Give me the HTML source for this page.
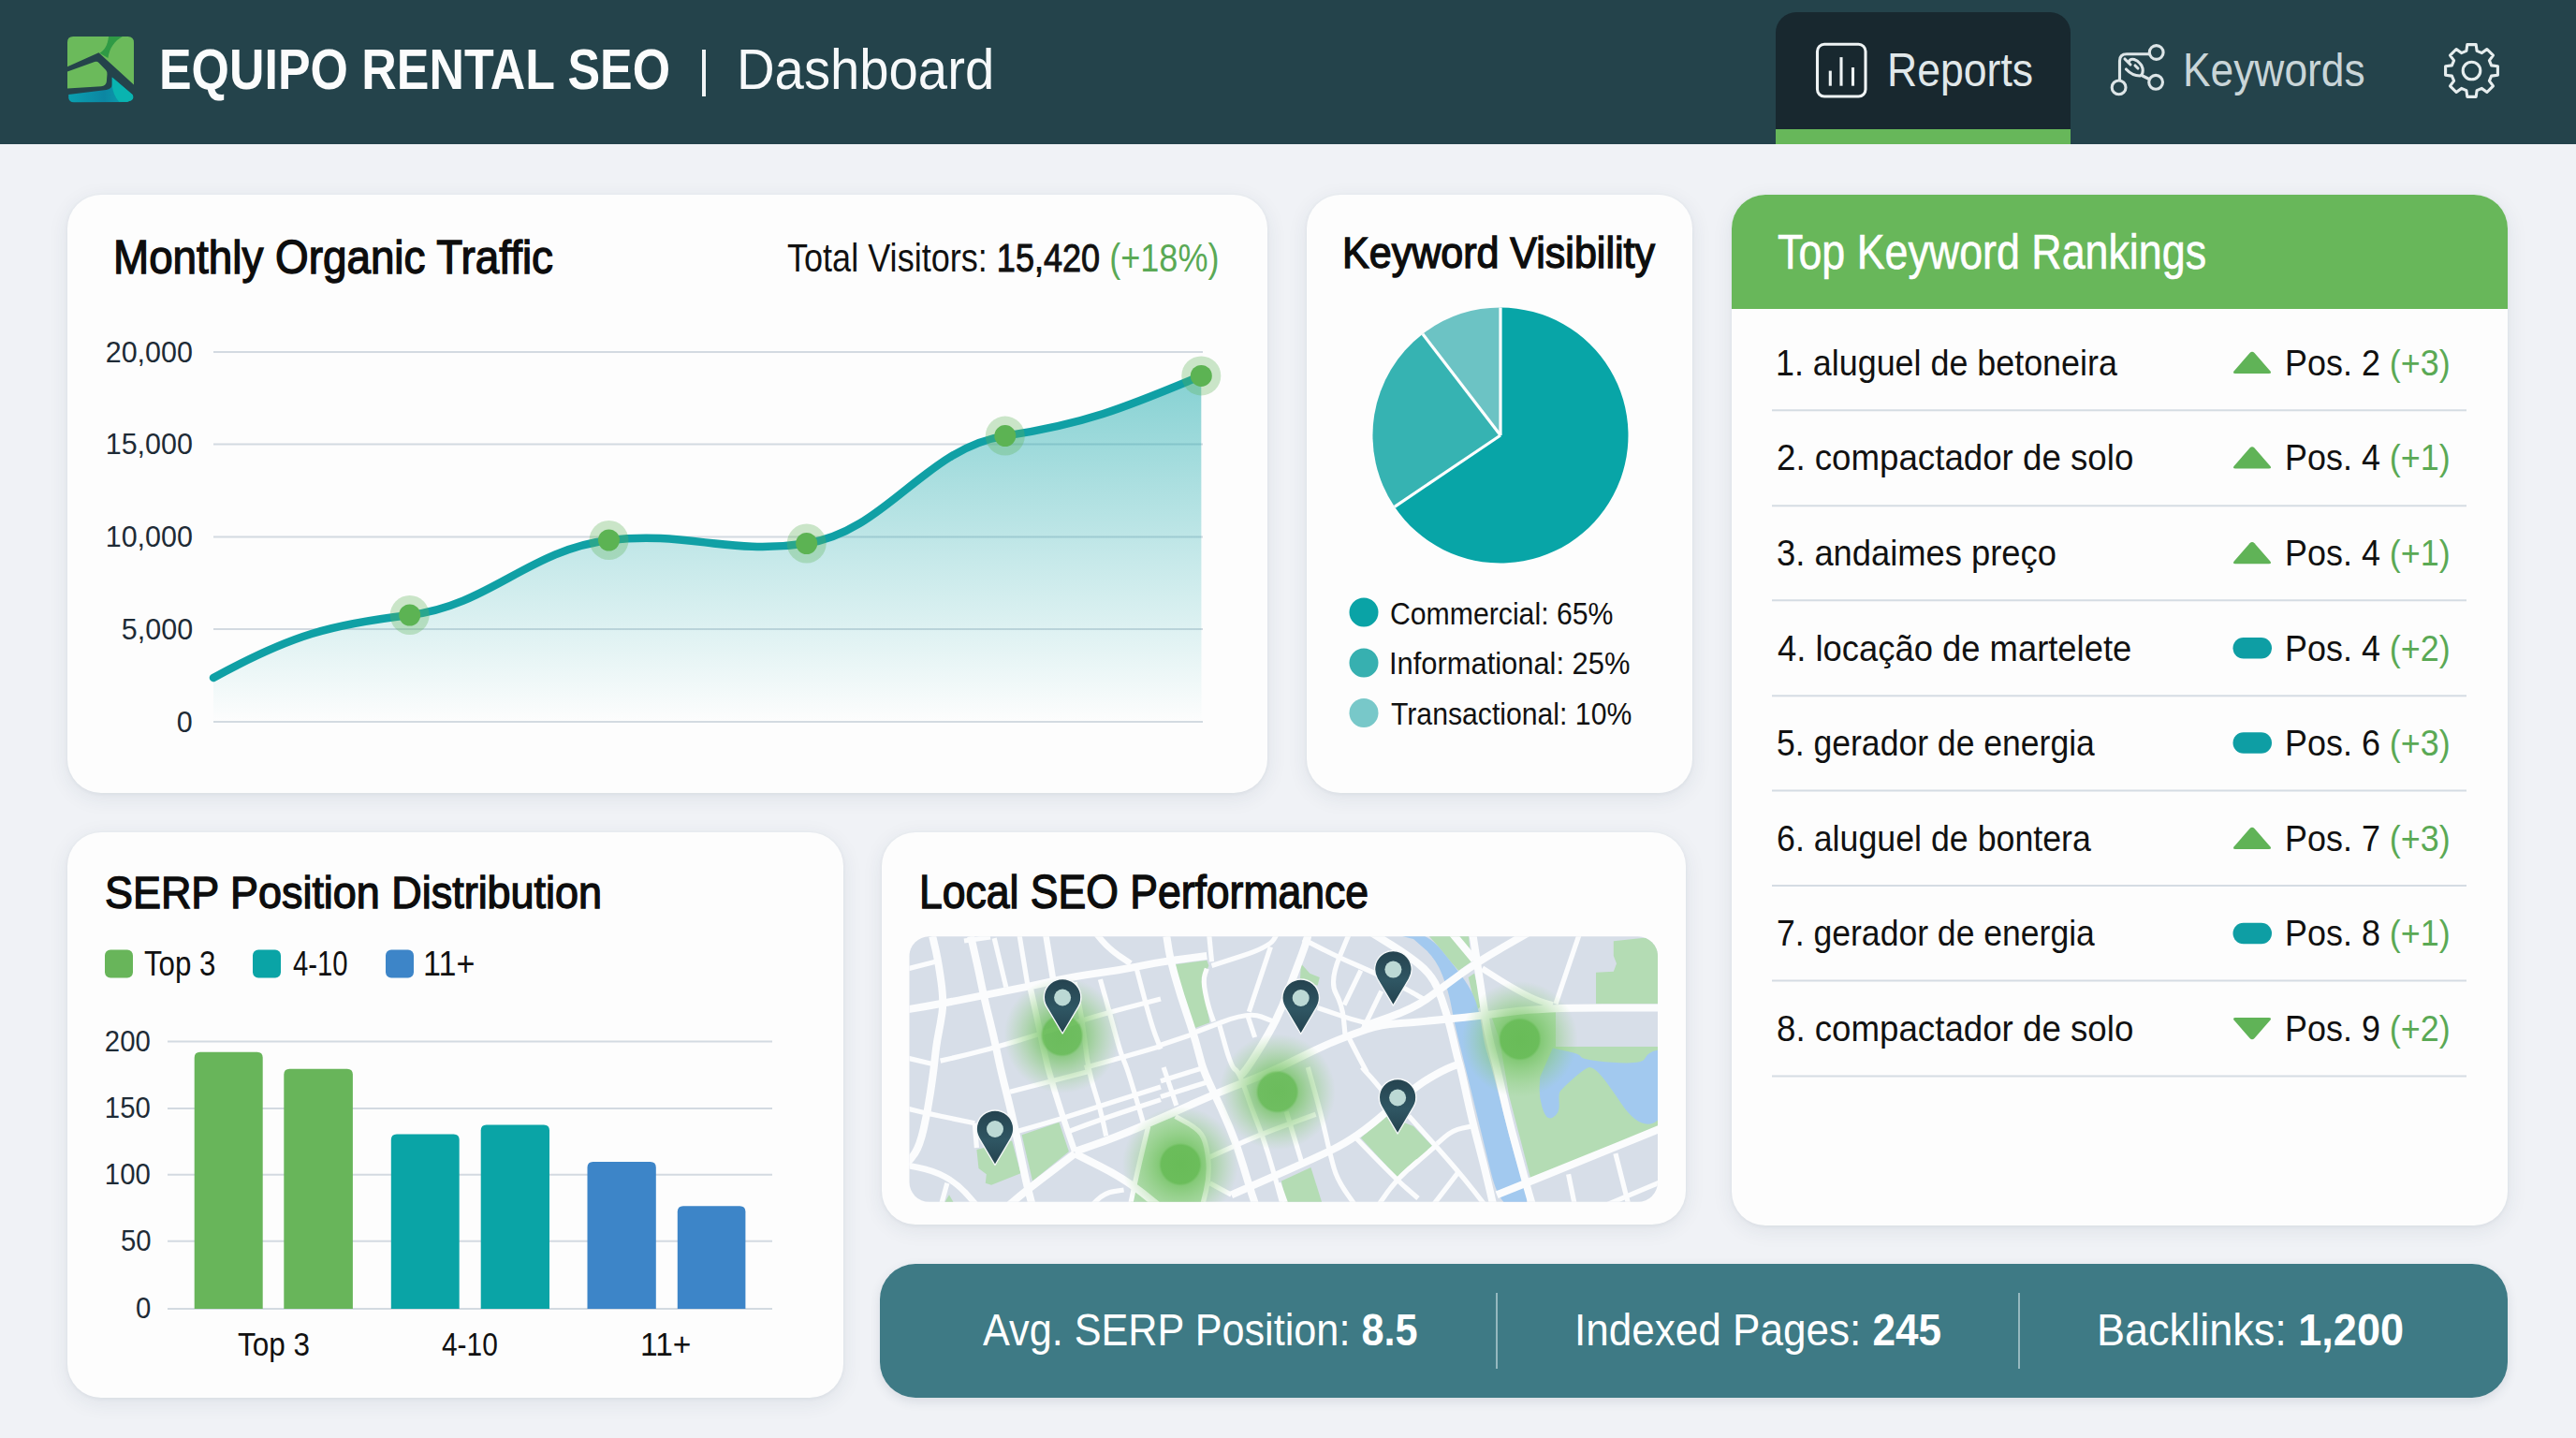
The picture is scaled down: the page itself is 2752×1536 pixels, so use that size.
<!DOCTYPE html>
<html><head><meta charset="utf-8"><title>Equipo Rental SEO Dashboard</title>
<style>
html,body{margin:0;padding:0;}
body{width:2752px;height:1536px;position:relative;overflow:hidden;background:#f0f2f6;font-family:"Liberation Sans", sans-serif;}
.t{position:absolute;white-space:pre;line-height:1;}
.t b{font-weight:700;}
.med{-webkit-text-stroke:1px currentColor;}
.card{position:absolute;background:#fdfdfd;border-radius:36px;box-shadow:0 5px 22px rgba(40,60,80,0.085),0 1px 4px rgba(40,60,80,0.06);}
svg.full{position:absolute;left:0;top:0;}
</style></head><body>
<div style="position:absolute;left:0;top:0;width:2752px;height:154px;background:#24434b;"></div>
<div style="position:absolute;left:1897px;top:13px;width:315px;height:141px;background:#18282f;border-radius:22px 22px 0 0;"></div>
<div style="position:absolute;left:1897px;top:138px;width:315px;height:16px;background:#67b75a;"></div>

<div class="card" style="left:72px;top:208px;width:1282px;height:639px;"></div>
<div class="card" style="left:1396px;top:208px;width:412px;height:639px;"></div>
<div class="card" style="left:1850px;top:208px;width:829px;height:1101px;overflow:hidden;"><div style="position:absolute;left:0;top:0;width:829px;height:122px;background:#68b75a;"></div></div>
<div class="card" style="left:72px;top:889px;width:829px;height:604px;"></div>
<div class="card" style="left:942px;top:889px;width:859px;height:419px;"></div>
<div style="position:absolute;left:940px;top:1350px;width:1739px;height:143px;background:#3e7a85;border-radius:38px;box-shadow:0 4px 12px rgba(40,60,80,0.12);"></div>
<div style="position:absolute;left:1598px;top:1381px;width:2px;height:81px;background:rgba(220,235,238,0.55);"></div>
<div style="position:absolute;left:2156px;top:1381px;width:2px;height:81px;background:rgba(220,235,238,0.55);"></div>
<div style="position:absolute;left:750px;top:53px;width:4px;height:50px;background:#f0f4f5;"></div>

<svg class="full" width="2752" height="1536" viewBox="0 0 2752 1536">
<defs>
<linearGradient id="ga" x1="0" y1="0" x2="0" y2="1" gradientUnits="objectBoundingBox">
<stop offset="0" stop-color="#0ea5a8" stop-opacity="0.5"/>
<stop offset="0.55" stop-color="#0ea5a8" stop-opacity="0.22"/>
<stop offset="1" stop-color="#0ea5a8" stop-opacity="0.0"/>
</linearGradient>
</defs>
<line x1='228' y1='376' x2='1285' y2='376' stroke='#d3dae1' stroke-width='2'/><line x1='228' y1='474.5' x2='1285' y2='474.5' stroke='#d3dae1' stroke-width='2'/><line x1='228' y1='573.4' x2='1285' y2='573.4' stroke='#d3dae1' stroke-width='2'/><line x1='228' y1='672' x2='1285' y2='672' stroke='#d3dae1' stroke-width='2'/><line x1='228' y1='771' x2='1285' y2='771' stroke='#d3dae1' stroke-width='2'/>
<path d="M228,724 C311.9,677.9 353.8,667.1 437.7,657 C522.8,646.8 565.4,587.2 650.5,577 C735.0,566.9 777.2,593.2 861.7,580.5 C946.5,567.8 989.0,478.3 1073.8,465.6 C1157.6,453.0 1199.5,436.6 1283.3,401.4 L1283.5,771 L228,771 Z" fill="url(#ga)"/>
<path d="M228,724 C311.9,677.9 353.8,667.1 437.7,657 C522.8,646.8 565.4,587.2 650.5,577 C735.0,566.9 777.2,593.2 861.7,580.5 C946.5,567.8 989.0,478.3 1073.8,465.6 C1157.6,453.0 1199.5,436.6 1283.3,401.4" fill="none" stroke="#10a0a5" stroke-width="8.5" stroke-linecap="round"/>
<circle cx='437.7' cy='657' r='21' fill='#5fb35a' fill-opacity='0.32'/><circle cx='437.7' cy='657' r='11.5' fill='#5cb353'/><circle cx='650.5' cy='577' r='21' fill='#5fb35a' fill-opacity='0.32'/><circle cx='650.5' cy='577' r='11.5' fill='#5cb353'/><circle cx='861.7' cy='580.5' r='21' fill='#5fb35a' fill-opacity='0.32'/><circle cx='861.7' cy='580.5' r='11.5' fill='#5cb353'/><circle cx='1073.8' cy='465.6' r='21' fill='#5fb35a' fill-opacity='0.32'/><circle cx='1073.8' cy='465.6' r='11.5' fill='#5cb353'/><circle cx='1283.3' cy='401.4' r='21' fill='#5fb35a' fill-opacity='0.32'/><circle cx='1283.3' cy='401.4' r='11.5' fill='#5cb353'/>
<path d='M1603,465 L1603.0,328.5 A136.5,136.5 0 1 1 1489.8,541.3 Z' fill='#08a5a7'/><path d='M1603,465 L1489.8,541.3 A136.5,136.5 0 0 1 1519.9,356.7 Z' fill='#36b3b2'/><path d='M1603,465 L1519.9,356.7 A136.5,136.5 0 0 1 1603.0,328.5 Z' fill='#6cc3c4'/><line x1='1603' y1='465' x2='1603.0' y2='328.5' stroke='#fff' stroke-width='3.2'/><line x1='1603' y1='465' x2='1489.8' y2='541.3' stroke='#fff' stroke-width='3.2'/><line x1='1603' y1='465' x2='1519.9' y2='356.7' stroke='#fff' stroke-width='3.2'/>
<circle cx="1457" cy="654" r="15.5" fill="#0aa3a6"/>
<circle cx="1457" cy="708" r="15.5" fill="#37b0b0"/>
<circle cx="1457" cy="761.5" r="15.5" fill="#78c8c9"/>
<line x1='1893' y1='438.2' x2='2635' y2='438.2' stroke='#d5dce3' stroke-width='2'/><line x1='1893' y1='540.2' x2='2635' y2='540.2' stroke='#d5dce3' stroke-width='2'/><line x1='1893' y1='641.3' x2='2635' y2='641.3' stroke='#d5dce3' stroke-width='2'/><line x1='1893' y1='743.3' x2='2635' y2='743.3' stroke='#d5dce3' stroke-width='2'/><line x1='1893' y1='844.6' x2='2635' y2='844.6' stroke='#d5dce3' stroke-width='2'/><line x1='1893' y1='946' x2='2635' y2='946' stroke='#d5dce3' stroke-width='2'/><line x1='1893' y1='1047.4' x2='2635' y2='1047.4' stroke='#d5dce3' stroke-width='2'/><line x1='1893' y1='1149.4' x2='2635' y2='1149.4' stroke='#d5dce3' stroke-width='2'/>
<path d='M2388,399 L2424,399 Q2427,399 2425.5,396.5 L2408.5,377 Q2406,374.5 2403.5,377 L2386.5,396.5 Q2385,399 2388,399 Z' fill='#60b357'/><path d='M2388,500.4 L2424,500.4 Q2427,500.4 2425.5,497.9 L2408.5,478.4 Q2406,475.9 2403.5,478.4 L2386.5,497.9 Q2385,500.4 2388,500.4 Z' fill='#60b357'/><path d='M2388,602.2 L2424,602.2 Q2427,602.2 2425.5,599.7 L2408.5,580.2 Q2406,577.7 2403.5,580.2 L2386.5,599.7 Q2385,602.2 2388,602.2 Z' fill='#60b357'/><rect x='2385.5' y='681.0' width='41.5' height='22.5' rx='11.25' fill='#0e9ea4'/><rect x='2385.5' y='782.3' width='41.5' height='22.5' rx='11.25' fill='#0e9ea4'/><path d='M2388,907 L2424,907 Q2427,907 2425.5,904.5 L2408.5,885 Q2406,882.5 2403.5,885 L2386.5,904.5 Q2385,907 2388,907 Z' fill='#60b357'/><rect x='2385.5' y='985.8' width='41.5' height='22.5' rx='11.25' fill='#0e9ea4'/><path d='M2388,1087.1 L2424,1087.1 Q2427,1087.1 2425.5,1089.6 L2408.5,1109.1 Q2406,1111.6 2403.5,1109.1 L2386.5,1089.6 Q2385,1087.1 2388,1087.1 Z' fill='#60b357'/>
<rect x="112" y="1014.5" width="30" height="30" rx="6" fill="#68b55a"/>
<rect x="270" y="1014.5" width="30" height="30" rx="6" fill="#0aa4a6"/>
<rect x="412" y="1014.5" width="30" height="30" rx="6" fill="#3d85c8"/>
<line x1='179' y1='1112.6' x2='825' y2='1112.6' stroke='#d3dae1' stroke-width='2'/><line x1='179' y1='1183.9' x2='825' y2='1183.9' stroke='#d3dae1' stroke-width='2'/><line x1='179' y1='1254.8' x2='825' y2='1254.8' stroke='#d3dae1' stroke-width='2'/><line x1='179' y1='1325.7' x2='825' y2='1325.7' stroke='#d3dae1' stroke-width='2'/><line x1='179' y1='1398' x2='825' y2='1398' stroke='#d3dae1' stroke-width='2'/>
<path d='M207.7,1398 L207.7,1129.8 Q207.7,1123.8 213.7,1123.8 L274.7,1123.8 Q280.7,1123.8 280.7,1129.8 L280.7,1398 Z' fill='#68b55a'/><path d='M303.3,1398 L303.3,1147.7 Q303.3,1141.7 309.3,1141.7 L370.9,1141.7 Q376.9,1141.7 376.9,1147.7 L376.9,1398 Z' fill='#68b55a'/><path d='M417.8,1398 L417.8,1217.6 Q417.8,1211.6 423.8,1211.6 L484.7,1211.6 Q490.7,1211.6 490.7,1217.6 L490.7,1398 Z' fill='#0aa4a6'/><path d='M513.7,1398 L513.7,1207.4 Q513.7,1201.4 519.7,1201.4 L581,1201.4 Q587,1201.4 587,1207.4 L587,1398 Z' fill='#0aa4a6'/><path d='M627.5,1398 L627.5,1247 Q627.5,1241 633.5,1241 L694.8,1241 Q700.8,1241 700.8,1247 L700.8,1398 Z' fill='#3d85c8'/><path d='M723.8,1398 L723.8,1294.2 Q723.8,1288.2 729.8,1288.2 L790.4,1288.2 Q796.4,1288.2 796.4,1294.2 L796.4,1398 Z' fill='#3d85c8'/>
<clipPath id='mapclip'><rect x='971.5' y='1000.3' width='799.5' height='283.5' rx='21'/></clipPath>
<radialGradient id='glow'><stop offset='0' stop-color='#62b950' stop-opacity='0.92'/><stop offset='0.33' stop-color='#63ba51' stop-opacity='0.9'/><stop offset='0.37' stop-color='#72c260' stop-opacity='0.72'/><stop offset='0.68' stop-color='#82ca70' stop-opacity='0.38'/><stop offset='1' stop-color='#90d080' stop-opacity='0'/></radialGradient>
<linearGradient id='pin' x1='0' y1='0' x2='0' y2='1'><stop offset='0' stop-color='#25434f'/><stop offset='0.55' stop-color='#2f5663'/><stop offset='1' stop-color='#24424e'/></linearGradient>
<g clip-path='url(#mapclip)'>
<rect x='960' y='990' width='830' height='310' fill='#d7dee8'/>
<path d='M1253.6,1030.4 L1289.3,1025.7 L1291.4,1031.4 L1284.0,1047.2 L1292.4,1092.2 L1275.6,1098.5 L1264.1,1065.0 Z' fill='#b4dcb4'/>
<path d='M1389.9,1029.3 L1399.3,1039.8 L1409.8,1044.0 L1407.7,1052.4 L1388.8,1050.3 Z' fill='#b4dcb4'/>
<path d='M1723.8,1005.2 L1754.2,1002.1 L1780.0,1000.0 L1780.0,1072.3 L1705.0,1072.3 L1705.0,1038.8 L1723.8,1037.7 L1727.0,1029.3 L1723.8,1021.0 Z' fill='#b4dcb4'/>
<path d='M1525.0,998.0 L1568.7,998.0 L1571.8,1027.3 L1558.2,1036.7 L1549.8,1027.3 L1536.2,1010.5 Z' fill='#b4dcb4'/>
<path d='M1568.7,1044.0 L1575.0,1039.8 L1583.4,1073.4 L1577.1,1079.7 Z' fill='#b4dcb4'/>
<path d='M1592.0,1082.0 L1662.0,1078.0 L1662.0,1118.0 L1780.0,1118.0 L1780.0,1203.0 L1636.0,1262.0 L1612.0,1170.0 L1602.0,1110.0 Z' fill='#b4dcb4'/>
<path d='M1043.4,1228.0 L1081.1,1218.6 L1090.5,1253.2 L1059.1,1265.8 L1052.8,1263.7 L1053.8,1254.2 L1045.5,1248.0 Z' fill='#b4dcb4'/>
<path d='M1091.6,1212.3 L1131.4,1198.7 L1141.9,1230.1 L1103.1,1261.6 Z' fill='#b4dcb4'/>
<path d='M1006.0,1290.0 L1014.0,1276.3 L1022.0,1290.0 Z' fill='#b4dcb4'/>
<path d='M1368.9,1261.6 L1400.4,1246.9 L1414.0,1290.0 L1375.2,1290.0 Z' fill='#b4dcb4'/>
<path d='M1453.8,1215.5 L1481.1,1191.4 L1510.0,1203.0 L1529.9,1223.8 L1510.0,1243.8 L1493.6,1258.4 Z' fill='#b4dcb4'/>
<path d='M1206.9,1290.0 L1214.2,1255.3 L1226.8,1202.9 L1255.7,1192.4 L1281.9,1207.1 L1289.3,1223.8 L1292.4,1255.3 L1284.0,1290.0 Z' fill='#b4dcb4'/>
<path d='M1478.0,995.0 L1500.8,995.0 Q1523.6,995.0 1539.8,1014.8 Q1556.1,1034.6 1564.5,1046.7 Q1572.9,1058.7 1577.1,1071.2 Q1581.3,1083.8 1583.4,1099.5 Q1585.5,1115.3 1589.7,1127.7 Q1593.8,1140.0 1604.3,1181.9 Q1614.8,1223.8 1621.1,1244.2 Q1627.4,1264.7 1630.7,1277.3 Q1634.0,1290.0 1618.0,1290.0 Q1602.0,1290.0 1592.7,1251.7 Q1583.4,1213.4 1574.5,1176.7 Q1565.5,1140.0 1559.8,1117.2 Q1554.0,1094.3 1550.8,1076.5 Q1547.7,1058.7 1540.9,1041.4 Q1534.1,1024.1 1522.0,1013.5 L1510.0,1003.0 Z' fill='#a2c9ef'/>
<path d='M1658.8,1119.5 L1673.5,1122.7 Q1688.2,1125.8 1689.2,1128.9 Q1690.3,1132.1 1722.2,1134.7 Q1754.2,1137.3 1757.3,1130.5 Q1760.5,1123.7 1770.2,1121.8 Q1780.0,1120.0 1780.0,1158.3 Q1780.0,1196.6 1764.5,1200.3 Q1749.0,1204.0 1731.7,1178.3 Q1714.4,1152.6 1708.1,1146.3 Q1701.8,1140.0 1698.2,1140.0 Q1694.5,1140.0 1680.8,1152.0 Q1667.2,1164.1 1666.2,1166.7 Q1665.1,1169.3 1665.7,1178.2 Q1666.2,1187.2 1662.0,1191.3 Q1657.8,1195.5 1654.1,1194.0 Q1650.4,1192.4 1647.3,1181.9 Q1644.2,1171.4 1644.7,1161.0 L1645.2,1150.5 Z' fill='#a2c9ef'/>
<g fill='none' stroke='#fbfcfd' stroke-linecap='butt' stroke-linejoin='round'>
<path d='M996.2,1000.0 L999.4,1013.6 Q1002.5,1027.3 1005.4,1048.2 Q1008.3,1069.2 1006.5,1081.8 Q1004.6,1094.3 1002.5,1104.8 Q1000.4,1115.3 998.8,1130.2 Q997.3,1145.0 994.1,1166.1 Q991.0,1187.2 986.8,1205.5 Q982.6,1223.8 977.4,1231.7 Q972.1,1239.6 966.0,1244.8 L960.0,1250.0' stroke-width='8'/>
<path d='M1037.1,1000.0 L1041.3,1018.4 Q1045.5,1036.7 1048.1,1049.8 Q1050.7,1062.9 1054.3,1077.6 Q1058.0,1092.2 1061.2,1105.8 Q1064.3,1119.5 1066.9,1132.2 Q1069.6,1145.0 1074.3,1163.5 Q1079.0,1181.9 1083.7,1202.8 Q1088.4,1223.8 1092.1,1242.2 Q1095.8,1260.5 1098.9,1272.8 L1102.1,1285.0' stroke-width='8'/>
<path d='M965.0,1079.0 L987.4,1075.2 Q1009.8,1071.3 1030.8,1067.1 Q1051.8,1062.9 1075.9,1058.2 Q1100.0,1053.5 1121.0,1048.8 Q1141.9,1044.0 1159.7,1041.4 Q1177.5,1038.8 1194.3,1036.2 Q1211.1,1033.5 1225.5,1030.4 Q1240.0,1027.3 1264.7,1024.2 L1289.3,1021.0' stroke-width='8'/>
<path d='M1246.3,1000.0 L1248.4,1013.1 Q1250.5,1026.2 1255.8,1044.6 Q1261.0,1062.9 1267.8,1082.8 Q1274.6,1102.7 1277.8,1114.2 Q1280.9,1125.8 1283.5,1135.4 Q1286.1,1145.0 1295.5,1164.5 Q1305.0,1184.0 1313.4,1203.9 Q1321.8,1223.8 1328.0,1244.8 Q1334.3,1265.8 1337.4,1275.4 L1340.6,1285.0' stroke-width='8'/>
<path d='M1323.0,1150.0 L1326.5,1147.5 Q1330.1,1145.0 1342.7,1124.9 Q1355.3,1104.8 1363.2,1089.1 Q1371.0,1073.4 1376.2,1058.7 Q1381.5,1044.0 1388.3,1026.2 Q1395.1,1008.4 1396.7,1001.7 L1398.3,995.0' stroke-width='8'/>
<path d='M1148.2,1230.1 L1169.2,1222.8 Q1190.1,1215.5 1215.0,1205.0 Q1240.0,1194.5 1271.5,1180.3 Q1302.9,1166.2 1329.1,1156.2 Q1355.3,1146.3 1384.1,1131.8 Q1412.9,1117.4 1428.7,1111.1 Q1444.4,1104.8 1460.1,1099.5 Q1475.8,1094.3 1492.9,1093.2 Q1510.0,1092.0 1546.7,1088.5 Q1583.4,1084.9 1614.8,1080.7 Q1646.3,1076.5 1713.2,1076.5 L1780.0,1076.5' stroke-width='8'/>
<path d='M1148.2,1232.2 L1122.0,1252.2 Q1095.8,1272.1 1085.3,1281.0 L1074.8,1290.0' stroke-width='8'/>
<path d='M1148.2,1232.2 L1174.4,1245.3 Q1200.6,1258.4 1220.3,1274.2 L1240.0,1290.0' stroke-width='8'/>
<path d='M1315.5,1276.3 L1356.3,1258.4 Q1397.2,1240.6 1423.4,1228.0 Q1449.6,1215.5 1479.8,1188.8 Q1510.0,1162.0 1525.7,1152.5 Q1541.4,1143.1 1550.7,1139.5 L1560.0,1136.0' stroke-width='8'/>
<path d='M1463.2,995.0 L1486.6,1009.5 Q1510.0,1024.1 1520.5,1034.0 Q1531.0,1044.0 1535.7,1055.5 Q1540.4,1067.1 1544.6,1080.7 Q1548.8,1094.3 1553.0,1112.7 Q1557.2,1131.0 1558.8,1135.5 Q1560.3,1140.0 1566.6,1168.8 Q1572.9,1197.6 1579.2,1221.2 Q1585.5,1244.8 1590.7,1267.4 L1595.9,1290.0' stroke-width='8'/>
<path d='M1455.7,1096.5 L1482.8,1087.0 Q1510.0,1077.6 1525.7,1066.0 Q1541.4,1054.5 1559.2,1041.4 Q1577.1,1028.3 1606.0,1011.6 L1635.0,995.0' stroke-width='8'/>
<path d='M1572.9,995.0 L1575.5,1011.6 Q1578.1,1028.3 1581.8,1052.9 Q1585.5,1077.6 1587.6,1091.2 Q1589.7,1104.8 1594.4,1122.4 Q1599.1,1140.0 1604.3,1163.6 Q1609.6,1187.2 1615.8,1210.8 Q1622.1,1234.3 1627.9,1255.3 Q1633.7,1276.3 1635.8,1283.2 L1637.9,1290.0' stroke-width='8'/>
<path d='M1599.1,1276.3 L1638.4,1260.5 Q1677.7,1244.8 1728.8,1223.9 L1780.0,1203.0' stroke-width='8'/>
<path d='M1549.8,995.0 L1575.0,1025.2' stroke-width='8'/>
<path d='M1583.4,1034.6 L1599.1,1044.5 Q1614.8,1054.5 1627.9,1061.3 Q1641.0,1068.1 1649.9,1070.8 L1658.8,1073.4' stroke-width='6.5'/>
<path d='M1101.0,1056.6 L1105.2,1075.4 Q1109.4,1094.3 1114.1,1117.2 Q1118.8,1140.0 1126.2,1163.6 Q1133.5,1187.2 1140.8,1208.7 L1148.2,1230.1' stroke-width='6.5'/>
<path d='M965.0,1244.0 L980.6,1247.0 Q996.2,1250.0 1009.3,1256.8 Q1022.4,1263.7 1034.0,1276.8 L1045.5,1290.0' stroke-width='6.5'/>
<path d='M1116.7,995.0 L1125.1,1046.1' stroke-width='6.5'/>
<path d='M1169.1,995.0 L1177.0,1004.3 Q1184.9,1013.6 1196.4,1021.5 L1207.9,1029.3' stroke-width='6.5'/>
<path d='M1062.2,1002.1 L1074.8,1054.5' stroke-width='5.2'/>
<path d='M1088.4,995.0 L1097.9,1052.4' stroke-width='5.2'/>
<path d='M965.0,1036.0 L999.3,1027.3' stroke-width='5.2'/>
<path d='M1004.6,1133.1 L1018.8,1129.9 Q1032.9,1126.8 1048.6,1122.6 Q1064.3,1118.4 1085.3,1112.2 Q1106.3,1105.9 1127.2,1099.1 Q1148.2,1092.2 1169.2,1086.0 Q1190.1,1079.7 1215.0,1073.4 L1240.0,1067.1' stroke-width='5.2'/>
<path d='M965.0,1129.0 L995.2,1136.3' stroke-width='5.2'/>
<path d='M1175.4,1046.1 L1180.7,1064.9 Q1185.9,1083.8 1191.7,1104.8 Q1197.4,1125.8 1200.6,1132.9 Q1203.7,1140.0 1207.9,1153.7 Q1212.1,1167.3 1216.8,1183.5 L1221.5,1199.7' stroke-width='5.2'/>
<path d='M1214.2,1034.6 L1222.1,1064.4 Q1229.9,1094.3 1235.0,1107.4 L1240.0,1120.5' stroke-width='5.2'/>
<path d='M1158.7,1140.4 L1179.7,1134.7 Q1200.6,1128.9 1220.3,1123.2 L1240.0,1117.4' stroke-width='5.2'/>
<path d='M1148.2,1049.3 L1152.4,1070.2 Q1156.6,1091.2 1159.7,1118.1 Q1162.8,1145.0 1168.6,1162.4 Q1174.4,1179.8 1178.1,1196.6 L1181.7,1213.4' stroke-width='5.2'/>
<path d='M1291.4,995.0 L1294.5,1027.3' stroke-width='5.2'/>
<path d='M1294.5,1031.4 L1325.4,1021.5 Q1356.3,1011.5 1361.0,1003.2 L1365.8,995.0' stroke-width='5.2'/>
<path d='M1289.3,1034.6 L1287.2,1040.9 Q1285.1,1047.2 1287.7,1060.3 Q1290.3,1073.4 1293.4,1082.3 L1296.6,1091.2' stroke-width='5.2'/>
<path d='M1276.7,1102.7 L1305.5,1091.7 Q1334.3,1080.7 1347.4,1086.0 L1360.5,1091.2' stroke-width='5.2'/>
<path d='M1334.3,1080.7 L1357.4,1011.5' stroke-width='5.2'/>
<path d='M1332.2,1082.8 L1340.6,1108.0' stroke-width='5.2'/>
<path d='M1240.0,1116.3 L1276.7,1103.8' stroke-width='5.2'/>
<path d='M1392.0,1003.1 L1411.4,1013.1 Q1430.8,1023.1 1450.7,1031.5 Q1470.6,1039.8 1490.3,1050.3 Q1510.0,1060.8 1515.2,1063.9 L1520.5,1067.1' stroke-width='5.2'/>
<path d='M1442.3,995.0 L1431.3,1021.6 Q1420.3,1048.2 1427.1,1060.8 Q1433.9,1073.4 1435.5,1089.1 L1437.0,1104.8' stroke-width='5.2'/>
<path d='M1453.8,1036.7 L1436.0,1073.4' stroke-width='5.2'/>
<path d='M1407.7,1076.5 L1433.9,1085.4 Q1460.1,1094.3 1470.6,1092.8 L1481.1,1091.2' stroke-width='5.2'/>
<path d='M1475.8,1058.7 L1455.9,1099.6' stroke-width='5.2'/>
<path d='M1439.1,1104.8 L1441.8,1110.0 Q1444.4,1115.3 1452.2,1130.2 L1460.1,1145.0' stroke-width='5.2'/>
<path d='M1302.9,1095.4 L1309.2,1117.7 Q1315.5,1140.0 1319.7,1142.5 Q1323.8,1145.0 1330.1,1163.5 Q1336.4,1181.9 1342.7,1197.7 Q1349.0,1213.4 1355.3,1234.3 Q1361.6,1255.3 1366.3,1272.7 L1371.0,1290.0' stroke-width='5.2'/>
<path d='M1397.2,1140.0 L1404.6,1166.2 Q1411.9,1192.4 1416.6,1213.3 Q1421.3,1234.3 1425.0,1247.4 Q1428.7,1260.5 1439.2,1275.2 L1449.6,1290.0' stroke-width='5.2'/>
<path d='M1240.0,1154.7 L1287.2,1140.0' stroke-width='5.2'/>
<path d='M1240.0,1171.4 L1290.3,1155.7' stroke-width='5.2'/>
<path d='M1243.1,1140.0 L1256.8,1180.9' stroke-width='5.2'/>
<path d='M1291.4,1236.4 L1318.1,1224.3 Q1344.8,1212.3 1375.2,1201.3 L1405.6,1190.3' stroke-width='5.2'/>
<path d='M1454.9,1140.0 L1465.3,1151.5 Q1475.8,1163.1 1482.9,1174.0 L1490.0,1185.0' stroke-width='5.2'/>
<path d='M1448.6,1215.5 L1470.0,1237.5 Q1491.5,1259.5 1503.2,1269.8 L1515.0,1280.0' stroke-width='5.2'/>
<path d='M1515.0,1240.0 L1503.2,1250.2 Q1491.5,1260.5 1481.0,1275.2 L1470.6,1290.0' stroke-width='5.2'/>
<path d='M1255.7,1192.4 L1268.8,1199.8 Q1281.9,1207.1 1285.6,1215.4 Q1289.3,1223.8 1290.8,1239.5 Q1292.4,1255.3 1288.2,1272.7 L1284.0,1290.0' stroke-width='5.2'/>
<path d='M1292.4,1263.7 L1315.5,1276.3' stroke-width='5.2'/>
<path d='M1365.8,1263.7 L1375.2,1290.0' stroke-width='5.2'/>
<path d='M1374.2,1187.2 L1391.0,1242.7' stroke-width='5.2'/>
<path d='M965.0,1183.0 L978.0,1186.2 Q991.0,1189.3 1016.1,1194.5 L1041.3,1199.7' stroke-width='5.2'/>
<path d='M1041.3,1199.7 L1043.4,1226.0' stroke-width='5.2'/>
<path d='M1079.0,1166.2 L1163.9,1144.2' stroke-width='5.2'/>
<path d='M1088.4,1208.1 L1112.0,1201.3 Q1135.6,1194.5 1157.6,1187.2 Q1179.6,1179.8 1209.8,1170.4 L1240.0,1161.0' stroke-width='5.2'/>
<path d='M1142.9,1208.1 L1161.2,1201.3 Q1179.6,1194.5 1209.8,1184.5 L1240.0,1174.6' stroke-width='5.2'/>
<path d='M1011.9,1263.7 L1004.6,1290.0' stroke-width='5.2'/>
<path d='M1163.9,1290.0 L1171.8,1282.1 Q1179.6,1274.2 1190.1,1272.6 L1200.6,1271.0' stroke-width='5.2'/>
<path d='M1226.8,1202.9 L1220.5,1229.1 Q1214.2,1255.3 1210.6,1272.7 L1206.9,1290.0' stroke-width='5.2'/>
<path d='M1688.2,995.0 L1662.0,1072.3' stroke-width='5.2'/>
<path d='M1709.1,1290.0 L1780.0,1260.0' stroke-width='5.2'/>
<path d='M1675.6,1254.2 L1682.9,1290.0' stroke-width='5.2'/>
<path d='M1725.9,1232.2 L1740.6,1290.0' stroke-width='5.2'/>
<path d='M1535.2,1221.8 L1543.6,1214.4 Q1551.9,1207.1 1562.4,1205.0 L1572.9,1202.9' stroke-width='5.2'/>
<path d='M1505.0,1192.0 L1531.1,1221.0 Q1557.2,1250.0 1572.9,1270.0 L1588.6,1290.0' stroke-width='5.2'/>
<path d='M1505.0,1249.0 L1534.1,1223.8' stroke-width='5.2'/>
<path d='M1528.9,1290.0 L1557.2,1253.2' stroke-width='5.2'/>
<path d='M1030.0,1005.0 L1058.0,1001.0' stroke-width='5.2'/>
</g>
<circle cx='1134.6' cy='1105.9' r='62' fill='url(#glow)'/>
<circle cx='1364.7' cy='1166.2' r='62' fill='url(#glow)'/>
<circle cx='1261' cy='1243.8' r='62' fill='url(#glow)'/>
<circle cx='1623.7' cy='1110' r='62' fill='url(#glow)'/>
</g>
<path d='M1135.1,1104.0 L1118.1,1075.4 A19.8,19.8 0 1 1 1152.1,1075.4 Z' fill='url(#pin)' stroke='#f5f8f9' stroke-width='1.4' stroke-linejoin='round'/>
<circle cx='1135.1' cy='1065.5' r='9' fill='#bcd9d5'/>
<path d='M1389.7,1104.5 L1372.7,1075.9 A19.8,19.8 0 1 1 1406.7,1075.9 Z' fill='url(#pin)' stroke='#f5f8f9' stroke-width='1.4' stroke-linejoin='round'/>
<circle cx='1389.7' cy='1066' r='9' fill='#bcd9d5'/>
<path d='M1488.4,1074.1 L1471.4,1045.5 A19.8,19.8 0 1 1 1505.4,1045.5 Z' fill='url(#pin)' stroke='#f5f8f9' stroke-width='1.4' stroke-linejoin='round'/>
<circle cx='1488.4' cy='1035.6' r='9' fill='#bcd9d5'/>
<path d='M1063,1244.5 L1046.0,1215.9 A19.8,19.8 0 1 1 1080.0,1215.9 Z' fill='url(#pin)' stroke='#f5f8f9' stroke-width='1.4' stroke-linejoin='round'/>
<circle cx='1063' cy='1206' r='9' fill='#bcd9d5'/>
<path d='M1493.1,1211.0 L1476.1,1182.4 A19.8,19.8 0 1 1 1510.1,1182.4 Z' fill='url(#pin)' stroke='#f5f8f9' stroke-width='1.4' stroke-linejoin='round'/>
<circle cx='1493.1' cy='1172.5' r='9' fill='#bcd9d5'/>
<g transform="translate(72,39) scale(0.0620) translate(-190,-140)">
<defs><linearGradient id="lgt" x1="0" y1="0" x2="1" y2="0"><stop offset="0" stop-color="#0aa0b0"/><stop offset="0.55" stop-color="#0c86a2"/><stop offset="1" stop-color="#0aa7b0"/></linearGradient></defs>
<path d="M190,660 L730,420 L1335,970 L1335,245 Q1335,140 1230,140 L290,140 Q190,140 190,240 Z" fill="#6bba5b"/>
<path d="M900,140 L1140,140 C1000,220 920,330 890,510 L745,428 C830,380 885,290 900,140 Z" fill="#2f9a45"/>
<path d="M190,745 L660,575 Q700,560 730,590 L855,720 Q880,750 875,790 L865,920 Q855,995 770,1000 L190,1035 Z" fill="#6bba5b"/>
<path d="M210,1140 L860,1060 Q950,1045 960,980 L960,840 L1310,1140 Q1345,1200 1290,1240 L1220,1270 L300,1275 Q220,1265 210,1200 Z" fill="url(#lgt)"/>
<path d="M960,840 L1310,1140 Q1345,1200 1290,1240 L1220,1265 L1080,1265 Q985,1160 960,990 Z" fill="#09b4b0"/>
</g>
<g fill="none" stroke="#eef3f4" stroke-width="3.1">
<rect x="1941.5" y="47.3" width="51.5" height="55.7" rx="7.5"/>
<line x1="1955.3" y1="75.6" x2="1955.3" y2="91.7"/>
<line x1="1967" y1="61.1" x2="1967" y2="91.7"/>
<line x1="1979.5" y1="72" x2="1979.5" y2="91.7"/>
</g>
<g fill="none" stroke="#dde5e7" stroke-width="3.1" stroke-linecap="round" stroke-linejoin="round">
<circle cx="2303.7" cy="56" r="7.4"/>
<circle cx="2263.6" cy="93.4" r="7.4"/>
<circle cx="2303.1" cy="87.8" r="7.4"/>
<path d="M2264.5,85.5 L2264.5,65 Q2264.5,57.8 2272,57.8 L2296,57.8"/>
<path d="M2271.5,74 Q2278,81 2286,81 Q2290,80 2289,73 Q2287,66 2280,63.5 Q2276,62.5 2274.5,65.5"/>
<path d="M2270,63 L2276,69"/>
<path d="M2281,70 L2284,73"/>
<path d="M2288,80.5 L2296,84.5"/>
</g>
<g fill="none" stroke="#e6edee" stroke-width="3.1" stroke-linejoin="round">
<path d="M2634.9,54.4 L2635.8,47.6 L2645.2,47.6 L2646.1,54.4 L2651.4,56.6 L2656.9,52.5 L2663.5,59.1 L2659.4,64.6 L2661.6,69.9 L2668.4,70.8 L2668.4,80.2 L2661.6,81.1 L2659.4,86.4 L2663.5,91.9 L2656.9,98.5 L2651.4,94.4 L2646.1,96.6 L2645.2,103.4 L2635.8,103.4 L2634.9,96.6 L2629.6,94.4 L2624.1,98.5 L2617.5,91.9 L2621.6,86.4 L2619.4,81.1 L2612.6,80.2 L2612.6,70.8 L2619.4,69.9 L2621.6,64.6 L2617.5,59.1 L2624.1,52.5 L2629.6,56.6 Z"/>
<circle cx="2640.5" cy="75.5" r="9.3"/>
</g>

</svg>
<div id='h1' class='t' style='left:169.97px;top:42.9px;font-size:61.5px;font-weight:700;color:#fbfcfc;transform:scaleX(0.8440);transform-origin:left center;'>EQUIPO RENTAL SEO</div>
<div id='h2' class='t' style='left:786.89px;top:42.9px;font-size:61.5px;font-weight:400;color:#f7f9fa;transform:scaleX(0.9146);transform-origin:left center;'>Dashboard</div>
<div id='nav1' class='t' style='left:2015.92px;top:50.4px;font-size:49.5px;font-weight:400;color:#e1e8ea;transform:scaleX(0.9007);transform-origin:left center;'>Reports</div>
<div id='nav2' class='t' style='left:2331.93px;top:50.4px;font-size:49.5px;font-weight:400;color:#c9d5d8;transform:scaleX(0.8954);transform-origin:left center;'>Keywords</div>
<div id='a_title' class='t' style='left:120.99px;top:249.7px;font-size:50px;font-weight:400;color:#0d0d0d;transform:scaleX(0.9159);transform-origin:left center;-webkit-text-stroke:1.4px #0d0d0d;'>Monthly Organic Traffic</div>
<div id='a_total' class='t' style='left:840.50px;top:254.6px;font-size:42px;font-weight:400;color:#111;transform:scaleX(0.8588);transform-origin:left center;'>Total Visitors: <span class=med>15,420</span> <span style='color:#5aa955'>(+18%)</span></div>
<div id='ya0' class='t' style='right:2546.00px;top:359.9px;font-size:32px;font-weight:400;color:#1e2b36;transform:scaleX(0.9521);transform-origin:right center;'>20,000</div>
<div id='ya1' class='t' style='right:2546.00px;top:458.4px;font-size:32px;font-weight:400;color:#1e2b36;transform:scaleX(0.9521);transform-origin:right center;'>15,000</div>
<div id='ya2' class='t' style='right:2546.00px;top:557.3px;font-size:32px;font-weight:400;color:#1e2b36;transform:scaleX(0.9521);transform-origin:right center;'>10,000</div>
<div id='ya3' class='t' style='right:2546.00px;top:655.9px;font-size:32px;font-weight:400;color:#1e2b36;transform:scaleX(0.9521);transform-origin:right center;'>5,000</div>
<div id='ya4' class='t' style='right:2546.00px;top:754.9px;font-size:32px;font-weight:400;color:#1e2b36;transform:scaleX(0.9521);transform-origin:right center;'>0</div>
<div id='b_title' class='t' style='left:1433.99px;top:246.6px;font-size:46.5px;font-weight:400;color:#0d0d0d;transform:scaleX(0.9253);transform-origin:left center;-webkit-text-stroke:1.4px #0d0d0d;'>Keyword Visibility</div>
<div id='leg0' class='t' style='left:1484.58px;top:637.7px;font-size:34px;font-weight:400;color:#111;transform:scaleX(0.8885);transform-origin:left center;'>Commercial: 65%</div>
<div id='leg1' class='t' style='left:1483.58px;top:690.9px;font-size:34px;font-weight:400;color:#111;transform:scaleX(0.9080);transform-origin:left center;'>Informational: 25%</div>
<div id='leg2' class='t' style='left:1485.70px;top:744.7px;font-size:34px;font-weight:400;color:#111;transform:scaleX(0.8878);transform-origin:left center;'>Transactional: 10%</div>
<div id='c_title' class='t' style='left:1899.00px;top:244.3px;font-size:51px;font-weight:400;color:#ffffff;transform:scaleX(0.8781);transform-origin:left center;-webkit-text-stroke:0.6px #fff;'>Top Keyword Rankings</div>
<div id='r0' class='t' style='left:1897.01px;top:368.0px;font-size:39px;font-weight:400;color:#111;transform:scaleX(0.9194);transform-origin:left center;'>1. aluguel de betoneira</div>
<div id='p0' class='t' style='left:2441.29px;top:368.0px;font-size:39px;font-weight:400;color:#111;transform:scaleX(0.9213);transform-origin:left center;'>Pos. 2 <span style='color:#5aa955'>(+3)</span></div>
<div id='r1' class='t' style='left:1897.98px;top:469.4px;font-size:39px;font-weight:400;color:#111;transform:scaleX(0.9405);transform-origin:left center;'>2. compactador de solo</div>
<div id='p1' class='t' style='left:2441.29px;top:469.4px;font-size:39px;font-weight:400;color:#111;transform:scaleX(0.9213);transform-origin:left center;'>Pos. 4 <span style='color:#5aa955'>(+1)</span></div>
<div id='r2' class='t' style='left:1897.99px;top:571.2px;font-size:39px;font-weight:400;color:#111;transform:scaleX(0.9314);transform-origin:left center;'>3. andaimes preço</div>
<div id='p2' class='t' style='left:2441.29px;top:571.2px;font-size:39px;font-weight:400;color:#111;transform:scaleX(0.9213);transform-origin:left center;'>Pos. 4 <span style='color:#5aa955'>(+1)</span></div>
<div id='r3' class='t' style='left:1899.00px;top:672.5px;font-size:39px;font-weight:400;color:#111;transform:scaleX(0.9331);transform-origin:left center;'>4. locação de martelete</div>
<div id='p3' class='t' style='left:2441.29px;top:672.5px;font-size:39px;font-weight:400;color:#111;transform:scaleX(0.9213);transform-origin:left center;'>Pos. 4 <span style='color:#5aa955'>(+2)</span></div>
<div id='r4' class='t' style='left:1898.01px;top:773.8px;font-size:39px;font-weight:400;color:#111;transform:scaleX(0.9112);transform-origin:left center;'>5. gerador de energia</div>
<div id='p4' class='t' style='left:2441.29px;top:773.8px;font-size:39px;font-weight:400;color:#111;transform:scaleX(0.9213);transform-origin:left center;'>Pos. 6 <span style='color:#5aa955'>(+3)</span></div>
<div id='r5' class='t' style='left:1898.01px;top:876.0px;font-size:39px;font-weight:400;color:#111;transform:scaleX(0.9165);transform-origin:left center;'>6. aluguel de bontera</div>
<div id='p5' class='t' style='left:2441.29px;top:876.0px;font-size:39px;font-weight:400;color:#111;transform:scaleX(0.9213);transform-origin:left center;'>Pos. 7 <span style='color:#5aa955'>(+3)</span></div>
<div id='r6' class='t' style='left:1898.01px;top:977.3px;font-size:39px;font-weight:400;color:#111;transform:scaleX(0.9112);transform-origin:left center;'>7. gerador de energia</div>
<div id='p6' class='t' style='left:2441.29px;top:977.3px;font-size:39px;font-weight:400;color:#111;transform:scaleX(0.9213);transform-origin:left center;'>Pos. 8 <span style='color:#5aa955'>(+1)</span></div>
<div id='r7' class='t' style='left:1897.98px;top:1078.6px;font-size:39px;font-weight:400;color:#111;transform:scaleX(0.9405);transform-origin:left center;'>8. compactador de solo</div>
<div id='p7' class='t' style='left:2441.29px;top:1078.6px;font-size:39px;font-weight:400;color:#111;transform:scaleX(0.9213);transform-origin:left center;'>Pos. 9 <span style='color:#5aa955'>(+2)</span></div>
<div id='d_title' class='t' style='left:111.99px;top:928.5px;font-size:49px;font-weight:400;color:#0d0d0d;transform:scaleX(0.9168);transform-origin:left center;-webkit-text-stroke:1.4px #0d0d0d;'>SERP Position Distribution</div>
<div id='dl0' class='t' style='left:153.56px;top:1012.0px;font-size:36px;font-weight:400;color:#111;transform:scaleX(0.8680);transform-origin:left center;'>Top 3</div>
<div id='dl1' class='t' style='left:313.05px;top:1012.0px;font-size:36px;font-weight:400;color:#111;transform:scaleX(0.8133);transform-origin:left center;'>4-10</div>
<div id='dl2' class='t' style='left:451.74px;top:1012.0px;font-size:36px;font-weight:400;color:#111;transform:scaleX(0.9469);transform-origin:left center;'>11+</div>
<div id='yd0' class='t' style='right:2591.00px;top:1096.9px;font-size:31px;font-weight:400;color:#1e2b36;transform:scaleX(0.9450);transform-origin:right center;'>200</div>
<div id='yd1' class='t' style='right:2591.00px;top:1168.2px;font-size:31px;font-weight:400;color:#1e2b36;transform:scaleX(0.9450);transform-origin:right center;'>150</div>
<div id='yd2' class='t' style='right:2591.00px;top:1239.1px;font-size:31px;font-weight:400;color:#1e2b36;transform:scaleX(0.9450);transform-origin:right center;'>100</div>
<div id='yd3' class='t' style='right:2591.00px;top:1310.0px;font-size:31px;font-weight:400;color:#1e2b36;transform:scaleX(0.9450);transform-origin:right center;'>50</div>
<div id='yd4' class='t' style='right:2591.00px;top:1382.3px;font-size:31px;font-weight:400;color:#1e2b36;transform:scaleX(0.9450);transform-origin:right center;'>0</div>
<div id='xd0' class='t' style='left:254.00px;top:1418.8px;font-size:34.5px;font-weight:400;color:#111;transform:scaleX(0.9124);transform-origin:left center;'>Top 3</div>
<div id='xd1' class='t' style='left:472.35px;top:1418.8px;font-size:34.5px;font-weight:400;color:#111;transform:scaleX(0.8660);transform-origin:left center;'>4-10</div>
<div id='xd2' class='t' style='left:684.49px;top:1418.8px;font-size:34.5px;font-weight:400;color:#111;transform:scaleX(0.9723);transform-origin:left center;'>11+</div>
<div id='e_title' class='t' style='left:981.57px;top:927.9px;font-size:50px;font-weight:400;color:#0d0d0d;transform:scaleX(0.8904);transform-origin:left center;-webkit-text-stroke:1.4px #0d0d0d;'>Local SEO Performance</div>
<div id='s1' class='t' style='left:1050.00px;top:1397.0px;font-size:48px;font-weight:400;color:#ffffff;transform:scaleX(0.9004);transform-origin:left center;'>Avg. SERP Position: <b>8.5</b></div>
<div id='s2' class='t' style='left:1681.97px;top:1397.0px;font-size:48px;font-weight:400;color:#ffffff;transform:scaleX(0.9181);transform-origin:left center;'>Indexed Pages: <b>245</b></div>
<div id='s3' class='t' style='left:2239.96px;top:1397.0px;font-size:48px;font-weight:400;color:#ffffff;transform:scaleX(0.9385);transform-origin:left center;'>Backlinks: <b>1,200</b></div>
</body></html>
